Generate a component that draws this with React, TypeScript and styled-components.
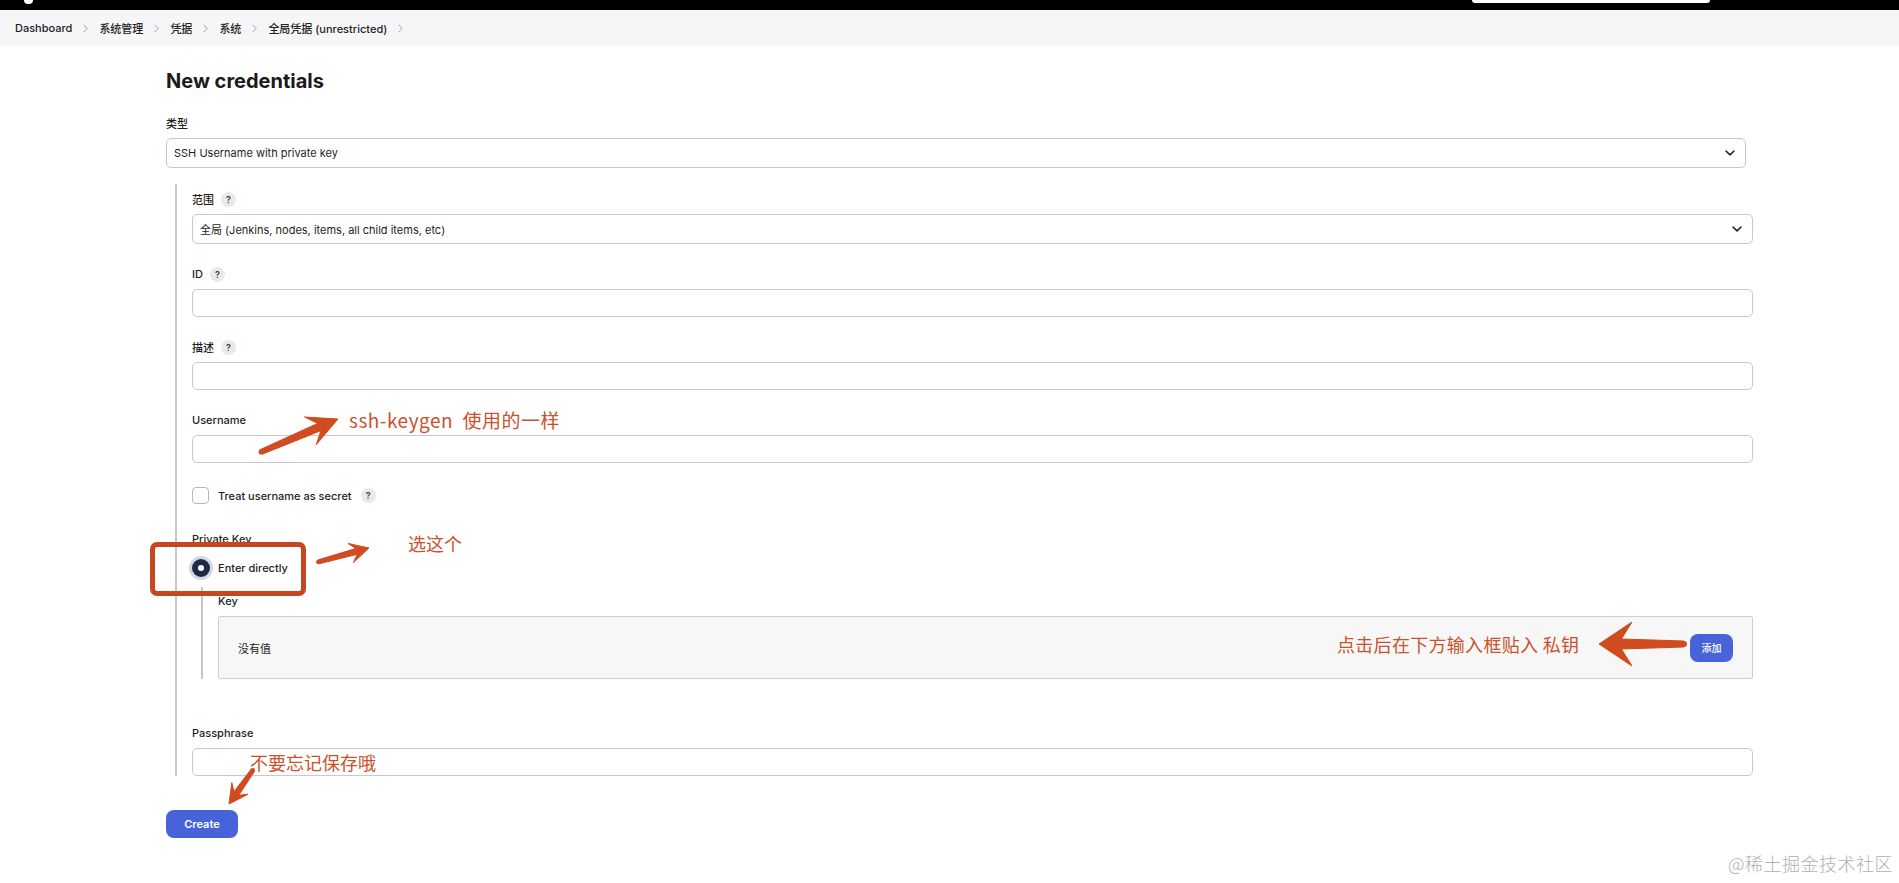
import React from "react";
import styled, { createGlobalStyle } from "styled-components";

const Global = createGlobalStyle`
  html, body { margin: 0; padding: 0; background: #ffffff; }
  body {
    font-family: Inter, "Noto Sans CJK SC", sans-serif;
    color: #1e1e20;
    width: 1899px;
    height: 883px;
    overflow: hidden;
    position: relative;
  }
  * { box-sizing: border-box; }
`;

const TopBar = styled.header`
  height: 10px;
  background: #000;
  display: flex;
  align-items: flex-start;
  padding-left: 24px;
`;

const LogoStub = styled.div`
  width: 9px;
  height: 4px;
  background: #fff;
  border-radius: 0 0 4px 4px;
`;

const SearchStub = styled.div`
  margin-left: auto;
  margin-right: 189px;
  width: 238px;
  height: 3px;
  background: #fff;
  border-radius: 0 0 6px 6px;
`;

const Crumbs = styled.nav`
  height: 36px;
  background: #f6f6f8;
  display: flex;
  align-items: center;
  padding-left: 15px;
  gap: 11px;
  font-size: 11px;
  font-weight: 500;
  color: #222;
`;

const Crumb = styled.span`
  white-space: nowrap;
`;

const CrumbSep = () => (
  <svg width="5" height="9" viewBox="0 0 5 9">
    <polyline points="0.6,0.8 4.2,4.5 0.6,8.2" fill="none" stroke="#a3a3a8" strokeWidth="1" />
  </svg>
);

const Main = styled.main`
  width: 1746px;
  padding-left: 166px;
`;

const Title = styled.h1`
  margin: 23px 0 0;
  font-size: 20px;
  line-height: 24px;
  font-weight: 700;
  color: #1a1a1c;
`;

const Field = styled.div<{ $mt?: number }>`
  margin-top: ${(p) => p.$mt ?? 0}px;
  display: flex;
  flex-direction: column;
  gap: 7px;
`;

const LabelRow = styled.div`
  height: 16px;
  display: flex;
  align-items: center;
  gap: 7px;
  font-size: 11px;
  font-weight: 500;
  color: #1e1e20;
`;

const Help = styled.span`
  width: 15px;
  height: 15px;
  border-radius: 50%;
  background: #e9e9ec;
  color: #3a3a3d;
  font-size: 9px;
  font-weight: 600;
  display: inline-flex;
  align-items: center;
  justify-content: center;
`;

const SelectBox = styled.div`
  height: 30px;
  border: 1px solid #c9c9cc;
  border-radius: 5px;
  background: #fff;
  display: flex;
  align-items: center;
  justify-content: space-between;
  padding: 0 9px 0 7px;
  font-size: 11px;
  color: #1e1e20;
`;

const Chevron = () => (
  <svg width="12" height="8" viewBox="0 0 12 8">
    <polyline points="2,2 6,5.8 10,2" fill="none" stroke="#222" strokeWidth="1.6" strokeLinecap="round" strokeLinejoin="round" />
  </svg>
);

const TextInput = styled.div`
  height: 28px;
  border: 1px solid #c9c9cc;
  border-radius: 5px;
  background: #fff;
`;

const Nested = styled.section<{ $mt: number; $pt: number; $ml: number; $mr?: number }>`
  margin-top: ${(p) => p.$mt}px;
  margin-left: ${(p) => p.$ml}px;
  margin-right: ${(p) => p.$mr ?? 0}px;
  border-left: 2px solid #c8c8cb;
  padding: ${(p) => p.$pt}px 0 0 15px;
  display: flex;
  flex-direction: column;
`;

const CheckRow = styled.label<{ $mt: number }>`
  margin-top: ${(p) => p.$mt}px;
  height: 17px;
  display: flex;
  align-items: center;
  gap: 9px;
  font-size: 11px;
  font-weight: 500;
`;

const CheckBox = styled.span`
  width: 17px;
  height: 17px;
  border: 1px solid #b8b8bc;
  border-radius: 4px;
  background: #fff;
`;

const PlainLabel = styled.div<{ $mt: number }>`
  margin-top: ${(p) => p.$mt}px;
  height: 14px;
  line-height: 14px;
  font-size: 11px;
  font-weight: 500;
`;

const RadioRow = styled.div<{ $mt: number }>`
  margin-top: ${(p) => p.$mt}px;
  height: 24px;
  display: flex;
  align-items: center;
  gap: 8px;
  font-size: 11px;
  font-weight: 500;
`;

const RadioDot = styled.span`
  width: 18px;
  height: 18px;
  border-radius: 50%;
  background: #1f2a44;
  box-shadow: 0 0 0 3px #d3d8e4;
  display: inline-flex;
  align-items: center;
  justify-content: center;
  &::after {
    content: "";
    width: 6px;
    height: 6px;
    border-radius: 50%;
    background: #fff;
  }
`;

const KeyBox = styled.div`
  margin-top: 8px;
  height: 63px;
  background: #f7f7f7;
  border: 1px solid #cfcfd2;
  border-radius: 2px;
  display: flex;
  align-items: center;
  justify-content: space-between;
  padding: 0 19px;
  font-size: 11px;
`;

const SmallButton = styled.button`
  width: 43px;
  height: 28px;
  border: none;
  border-radius: 8px;
  background: #4863d9;
  color: #fff;
  font-family: inherit;
  font-size: 10px;
  font-weight: 500;
  padding: 0;
`;

const CreateButton = styled.button`
  margin-top: 34px;
  width: 72px;
  height: 28px;
  border: none;
  border-radius: 8px;
  background: #4863d9;
  color: #fff;
  font-family: inherit;
  font-size: 11px;
  font-weight: 600;
  padding: 0;
`;

const Overlay = styled.div`
  position: absolute;
  inset: 0;
  pointer-events: none;
`;

const Note = styled.div<{ $x: number; $y: number; $size: number; $ls?: number }>`
  position: absolute;
  left: ${(p) => p.$x}px;
  top: ${(p) => p.$y}px;
  font-family: "Noto Sans CJK SC", sans-serif;
  font-size: ${(p) => p.$size}px;
  letter-spacing: ${(p) => p.$ls ?? 0}px;
  line-height: 1;
  color: #cb512c;
  white-space: pre;
`;

const Highlight = styled.div`
  position: absolute;
  left: 150px;
  top: 542px;
  width: 156px;
  height: 54px;
  border: 5px solid #c6461f;
  border-radius: 7px;
`;

const Watermark = styled.div`
  position: absolute;
  right: 6px;
  bottom: 7px;
  font-family: "Noto Sans CJK SC", sans-serif;
  font-size: 18px;
  font-weight: 300;
  color: #b0b0b2;
  letter-spacing: 0.5px;
`;

type ArrowProps = { x1: number; y1: number; x2: number; y2: number; head: number; half: number; neck: number; tail: number };

function arrowPoints({ x1, y1, x2, y2, head, half, neck, tail }: ArrowProps) {
  const dx = x2 - x1;
  const dy = y2 - y1;
  const L = Math.hypot(dx, dy);
  const ux = dx / L;
  const uy = dy / L;
  const nx = -uy;
  const ny = ux;
  const bx = x2 - ux * head;
  const by = y2 - uy * head;
  const kx = x2 - ux * head * 0.68;
  const ky = y2 - uy * head * 0.68;
  const pts = [
    [x1 + nx * tail, y1 + ny * tail],
    [kx + nx * neck, ky + ny * neck],
    [bx + nx * half, by + ny * half],
    [x2, y2],
    [bx - nx * half, by - ny * half],
    [kx - nx * neck, ky - ny * neck],
    [x1 - nx * tail, y1 - ny * tail],
  ];
  return pts.map((p) => p.map((v) => v.toFixed(1)).join(",")).join(" ");
}

const arrows: ArrowProps[] = [
  { x1: 261, y1: 452, x2: 338, y2: 419, head: 30, half: 15, neck: 4, tail: 2.5 },
  { x1: 318, y1: 562, x2: 369, y2: 548, head: 19, half: 10, neck: 3, tail: 2 },
  { x1: 1684, y1: 644, x2: 1599, y2: 644, head: 33, half: 22, neck: 5, tail: 3 },
  { x1: 253, y1: 770, x2: 229, y2: 804, head: 19, half: 10, neck: 3, tail: 2 },
];

const Annotations = () => (
  <Overlay>
    <svg width="1899" height="883" viewBox="0 0 1899 883" style={{ position: "absolute", left: 0, top: 0 }}>
      {arrows.map((a, i) => (
        <g key={i} fill="#d04b1f">
          <polygon points={arrowPoints(a)} strokeLinejoin="round" stroke="#d04b1f" strokeWidth="1" />
          <circle cx={a.x1} cy={a.y1} r={a.tail} />
        </g>
      ))}
    </svg>
    <Highlight />
    <Note $x={349} $y={410} $size={19} $ls={0.5}>{"ssh-keygen  使用的一样"}</Note>
    <Note $x={408} $y={534} $size={18}>选这个</Note>
    <Note $x={1337} $y={635} $size={18} $ls={0.3}>点击后在下方输入框贴入 私钥</Note>
    <Note $x={250} $y={753} $size={18}>不要忘记保存哦</Note>
  </Overlay>
);

export default function App() {
  return (
    <>
      <Global />
      <TopBar>
        <LogoStub />
        <SearchStub />
      </TopBar>
      <Crumbs>
        <Crumb>Dashboard</Crumb>
        <CrumbSep />
        <Crumb>系统管理</Crumb>
        <CrumbSep />
        <Crumb>凭据</Crumb>
        <CrumbSep />
        <Crumb>系统</Crumb>
        <CrumbSep />
        <Crumb>全局凭据 (unrestricted)</Crumb>
        <CrumbSep />
      </Crumbs>
      <Main>
        <Title>New credentials</Title>
        <Field $mt={22}>
          <LabelRow>类型</LabelRow>
          <SelectBox>
            <span>SSH Username with private key</span>
            <Chevron />
          </SelectBox>
        </Field>
        <Nested $mt={16} $pt={7} $ml={9} $mr={-7}>
          <Field>
            <LabelRow>
              范围 <Help>?</Help>
            </LabelRow>
            <SelectBox>
              <span>全局 (Jenkins, nodes, items, all child items, etc)</span>
              <Chevron />
            </SelectBox>
          </Field>
          <Field $mt={22}>
            <LabelRow>
              ID <Help>?</Help>
            </LabelRow>
            <TextInput />
          </Field>
          <Field $mt={22}>
            <LabelRow>
              描述 <Help>?</Help>
            </LabelRow>
            <TextInput />
          </Field>
          <Field $mt={22}>
            <LabelRow>Username</LabelRow>
            <TextInput />
          </Field>
          <CheckRow $mt={24}>
            <CheckBox />
            Treat username as secret <Help>?</Help>
          </CheckRow>
          <PlainLabel $mt={28}>Private Key</PlainLabel>
          <RadioRow $mt={10}>
            <RadioDot />
            Enter directly
          </RadioRow>
          <Nested $mt={7} $pt={7} $ml={9}>
            <PlainLabel $mt={0}>Key</PlainLabel>
            <KeyBox>
              <span>没有值</span>
              <SmallButton>添加</SmallButton>
            </KeyBox>
          </Nested>
          <Field $mt={46}>
            <LabelRow>Passphrase</LabelRow>
            <TextInput />
          </Field>
        </Nested>
        <CreateButton>Create</CreateButton>
      </Main>
      <Annotations />
      <Watermark>@稀土掘金技术社区</Watermark>
    </>
  );
}
